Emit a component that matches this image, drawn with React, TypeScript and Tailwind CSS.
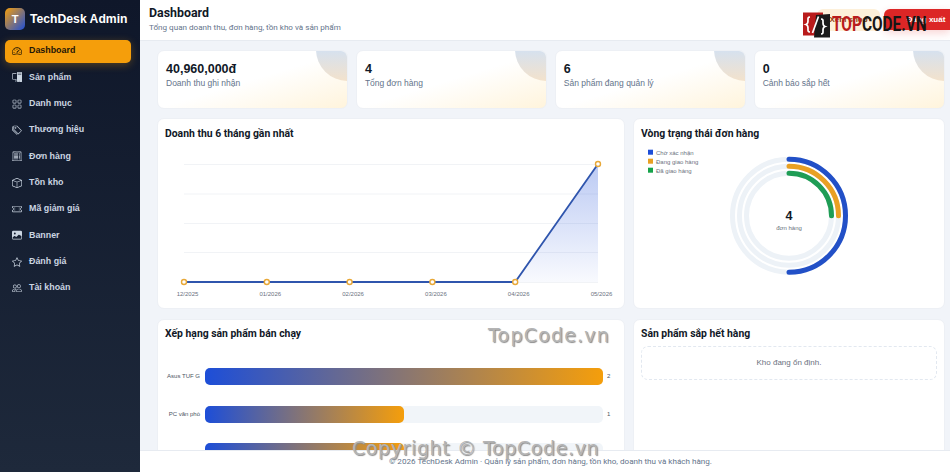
import {
  BsSpeedometer2,
  BsPcDisplay,
  BsGrid,
  BsTags,
  BsReceiptCutoff,
  BsBox,
  BsTicketPerforated,
  BsImageFill,
  BsStar,
  BsPeople,
} from 'react-icons/bs';

const navItems = [
  { label: 'Dashboard', icon: BsSpeedometer2, active: true },
  { label: 'Sản phẩm', icon: BsPcDisplay },
  { label: 'Danh mục', icon: BsGrid },
  { label: 'Thương hiệu', icon: BsTags },
  { label: 'Đơn hàng', icon: BsReceiptCutoff },
  { label: 'Tồn kho', icon: BsBox },
  { label: 'Mã giảm giá', icon: BsTicketPerforated },
  { label: 'Banner', icon: BsImageFill },
  { label: 'Đánh giá', icon: BsStar },
  { label: 'Tài khoản', icon: BsPeople },
];

const stats = [
  { value: '40,960,000đ', label: 'Doanh thu ghi nhận' },
  { value: '4', label: 'Tổng đơn hàng' },
  { value: '6', label: 'Sản phẩm đang quản lý' },
  { value: '0', label: 'Cảnh báo sắp hết' },
];

const months = ['12/2025', '01/2026', '02/2026', '03/2026', '04/2026', '05/2026'];
const pointX = [184, 266.8, 349.6, 432.4, 515.2, 598];
const pointY = [282, 282, 282, 282, 282, 164];

const bars = [
  { name: 'Asus TUF G', value: '2', width: '100%' },
  { name: 'PC văn phò', value: '1', width: '50%' },
  { name: '', value: '', width: '50%' },
];

const legend = [
  { label: 'Chờ xác nhận', color: '#1d4ed8' },
  { label: 'Đang giao hàng', color: '#e9a023' },
  { label: 'Đã giao hàng', color: '#16a34a' },
];

function Sidebar() {
  return (
    <aside className="w-[140px] shrink-0 bg-gradient-to-b from-[#0f172a] to-[#1e293b] px-[5px] pt-[8px]">
      <div className="flex items-center gap-[5px] h-[22px]">
        <div className="w-[20px] h-[22px] rounded-[5px] bg-linear-to-br/srgb from-[#f59e0b] to-[#1d4ed8] flex items-center justify-center text-white text-[11px] font-bold">
          T
        </div>
        <span className="text-white text-[12.2px] font-bold whitespace-nowrap">TechDesk Admin</span>
      </div>
      <nav className="mt-[9.5px] flex flex-col gap-[3.35px]">
        {navItems.map(item => {
          const Icon = item.icon;
          return (
            <div
              key={item.label}
              className={`h-[23px] w-[126px] rounded-[5px] flex items-center gap-[7px] pl-[7px] text-[8.9px] font-bold ${
                item.active
                  ? 'bg-[#f59e0b] text-[#1f1607] shadow-[0_2px_8px_rgba(245,158,11,0.3)]'
                  : 'text-[#cbd5e1]'
              }`}
            >
              <Icon className="w-[10px] h-[10px] shrink-0" />
              <span>{item.label}</span>
            </div>
          );
        })}
      </nav>
    </aside>
  );
}

function StatCard({ value, label }: { value: string; label: string }) {
  return (
    <div className="relative h-[59px] overflow-hidden rounded-[7px] border border-[#edf0f5] bg-gradient-to-br from-white from-50% to-[#fff4dc] pl-[8px] pt-[10px]">
      <div className="absolute -top-[33px] -right-[32px] w-[63px] h-[63px] rounded-full bg-linear-to-b/srgb from-[#d5e1f0] from-50% to-[#f3e2cc]" />
      <div className="relative text-[12.5px] leading-[16px] font-bold text-[#111827]">{value}</div>
      <div className="relative text-[8.5px] leading-[12px] text-[#64748b]">{label}</div>
    </div>
  );
}

function CardTitle({ children }: { children: string }) {
  return <h3 className="text-[10.4px] leading-[14px] font-bold text-[#111827] font-['Roboto',sans-serif]">{children}</h3>;
}

function RevenueChart() {
  const line = pointX.map((x, i) => `${x},${pointY[i]}`).join(' ');
  return (
    <svg viewBox="165 146 452 160" className="mt-[5px] block w-[452px] h-[160px]">
      <defs>
        <linearGradient id="area" x1="0" y1="0" x2="0" y2="1">
          <stop offset="0%" stopColor="#1d4ed8" stopOpacity="0.3" />
          <stop offset="100%" stopColor="#1d4ed8" stopOpacity="0.03" />
        </linearGradient>
      </defs>
      {[164.5, 194, 223.5, 252.5, 282.5].map(y => (
        <line key={y} x1="184" x2="598" y1={y} y2={y} stroke="#f1f3f6" strokeWidth="1" />
      ))}
      <polygon points="515.2,282 598,164 598,282" fill="url(#area)" />
      <polyline points={line} fill="none" stroke="#2f55ad" strokeWidth="1.8" />
      {pointX.map((x, i) => (
        <circle key={x} cx={x} cy={pointY[i]} r="2.5" fill="#fff" stroke="#e8a838" strokeWidth="1.4" />
      ))}
      {months.map((m, i) => (
        <text key={m} x={pointX[i] + 3.5} y="295.5" textAnchor="middle" fontSize="6" fill="#6b7280">
          {m}
        </text>
      ))}
    </svg>
  );
}

function StatusRing() {
  const cx = 789;
  const cy = 215.7;
  return (
    <svg viewBox="641 146 296 160" className="mt-[5px] block w-[296px] h-[160px]">
      {legend.map((l, i) => (
        <g key={l.label}>
          <rect x="648" y={149.7 + i * 9} width="5" height="5" fill={l.color} />
          <text x="656" y={154.5 + i * 9} fontSize="6" fill="#6b7280">
            {l.label}
          </text>
        </g>
      ))}
      {[56.5, 49.5, 42.5].map(r => (
        <circle key={r} cx={cx} cy={cy} r={r} fill="none" stroke="#edf2f7" strokeWidth="5" />
      ))}
      <path d={`M ${cx} ${cy - 56.5} A 56.5 56.5 0 0 1 ${cx} ${cy + 56.5}`} fill="none" stroke="#2250c7" strokeWidth="5" strokeLinecap="round" />
      <path d={`M ${cx} ${cy - 49.5} A 49.5 49.5 0 0 1 ${cx + 49.5} ${cy}`} fill="none" stroke="#e9a023" strokeWidth="5" strokeLinecap="round" />
      <path d={`M ${cx} ${cy - 42.5} A 42.5 42.5 0 0 1 ${cx + 42.5} ${cy}`} fill="none" stroke="#1f9d55" strokeWidth="5" strokeLinecap="round" />
      <text x={cx} y={cy + 4} textAnchor="middle" fontSize="12.5" fontWeight="700" fill="#111827">
        4
      </text>
      <text x={cx} y={cy + 14} textAnchor="middle" fontSize="6" fill="#6b7280">
        đơn hàng
      </text>
    </svg>
  );
}

function TopcodeLogo() {
  return (
    <div className="absolute left-[803px] top-[12px] flex items-center">
      <svg viewBox="0 0 27 26" className="w-[27px] h-[26px]">
        <rect x="0" y="0.5" width="20" height="23" fill="#b91c1c" />
        <polygon points="13,3 27,2 27,25.5 11,25.5" fill="#1a1a1a" />
        <path d="M7 5 C4.5 5 5 7 5 9 C5 11 4.5 12 3 12.5 C4.5 13 5 14 5 16 C5 18 4.5 20 7 20" fill="none" stroke="#fff" strokeWidth="1.7" />
        <path d="M9.5 21 L15.5 4.5" stroke="#fff" strokeWidth="1.7" />
        <path d="M18 7 C20.5 7 20 9 20 11 C20 13 20.5 14 22 14.5 C20.5 15 20 16 20 18 C20 20 20.5 22 18 22" fill="none" stroke="#fff" strokeWidth="1.7" />
      </svg>
      <span className="ml-[2px] origin-left scale-x-[0.79] text-[19.5px] leading-[24px] font-bold whitespace-nowrap font-['Roboto',sans-serif]">
        <span className="text-[#b91c1c]">TOP</span>
        <span className="text-[#161616]">CODE.VN</span>
      </span>
    </div>
  );
}

export default function App() {
  return (
    <div className="relative flex h-screen overflow-hidden bg-[#f1f4f9] font-['Liberation_Sans',Arial,sans-serif]">
      <Sidebar />
      <div className="flex-1 min-w-0 flex flex-col">
        <header className="h-[41px] shrink-0 bg-white border-b border-[#e7ebf1] flex justify-between pl-[9px]">
          <div className="pt-[5px]">
            <h1 className="text-[12.4px] leading-[15px] font-bold text-[#111827] font-['Roboto',sans-serif]">Dashboard</h1>
            <p className="text-[8.1px] leading-[12px] mt-[1px] text-[#64748b] font-['Roboto',sans-serif]">Tổng quan doanh thu, đơn hàng, tồn kho và sản phẩm</p>
          </div>
          <div className="flex gap-[4px] pt-[9px]">
            <button className="w-[63px] h-[22px] rounded-[6px] bg-[#fdf0da] text-[8px] font-bold text-[#92400e]">Xem shop</button>
            <button className="w-[66px] h-[21px] rounded-l-[6px] bg-[#dc2626] text-[8px] font-bold text-white shadow-[0_3px_8px_rgba(220,38,38,0.2)] pl-[18px]">
              Đăng xuất
            </button>
          </div>
        </header>

        <main className="flex-1 min-h-0 overflow-hidden pl-[17px] pr-[5px] pt-[9px]">
          <div className="grid grid-cols-4 gap-[7.5px]">
            {stats.map(s => (
              <StatCard key={s.label} value={s.value} label={s.label} />
            ))}
          </div>

          <div className="mt-[9px] grid grid-cols-[468px_312px] gap-[8px]">
            <section className="h-[191px] rounded-[7px] border border-[#edf0f5] bg-white px-[7px] pt-[8px]">
              <CardTitle>Doanh thu 6 tháng gần nhất</CardTitle>
              <RevenueChart />
            </section>
            <section className="h-[191px] rounded-[7px] border border-[#edf0f5] bg-white px-[7px] pt-[8px]">
              <CardTitle>Vòng trạng thái đơn hàng</CardTitle>
              <StatusRing />
            </section>
          </div>

          <div className="mt-[10px] grid grid-cols-[468px_312px] gap-[8px]">
            <section className="h-[200px] rounded-[7px] border border-[#edf0f5] bg-white px-[7px] pt-[7px]">
              <CardTitle>Xếp hạng sản phẩm bán chạy</CardTitle>
              <div className="mt-[27px] flex flex-col gap-[20.5px]">
                {bars.map((b, i) => (
                  <div key={i} className="flex items-center h-[17px]">
                    <span className="w-[35px] text-right text-[6px] text-[#4b5563] whitespace-nowrap">{b.name}</span>
                    <div className="ml-[5px] w-[398px] h-[17px] rounded-[5px] bg-[#f1f5f9]">
                      <div
                        className="h-full rounded-[5px] bg-linear-to-r/srgb from-[#1d4ed8] to-[#f59e0b]"
                        style={{ width: b.width }}
                      />
                    </div>
                    <span className="ml-[4px] text-[6px] text-[#4b5563]">{b.value}</span>
                  </div>
                ))}
              </div>
            </section>
            <section className="h-[200px] rounded-[7px] border border-[#edf0f5] bg-white px-[7px] pt-[7px]">
              <CardTitle>Sản phẩm sắp hết hàng</CardTitle>
              <div className="mt-[5px] h-[34px] rounded-[7px] border border-dashed border-[#e2e8f0] flex items-center justify-center text-[8px] text-[#6b7280]">
                Kho đang ổn định.
              </div>
            </section>
          </div>
        </main>

        <footer className="h-[22px] shrink-0 bg-white border-t border-[#e7ebf1] flex items-center justify-center pl-[11px] text-[8.1px] text-[#64748b] font-['Roboto',sans-serif]">
          © 2026 TechDesk Admin · Quản lý sản phẩm, đơn hàng, tồn kho, doanh thu và khách hàng.
        </footer>
      </div>

      {/* watermark của ảnh gốc */}
      <TopcodeLogo />
      <div className="absolute left-[488px] top-[323px] text-[19px] leading-[24px] tracking-[1.2px] text-[#b4b4b4] [text-shadow:1px_1px_1px_#8a8a8a] font-['DejaVu_Sans',sans-serif] whitespace-nowrap">
        TopCode.vn
      </div>
      <div className="absolute left-[352px] top-[436px] text-[19px] leading-[24px] tracking-[0.6px] text-[#b4b4b4] [text-shadow:1px_1px_1px_#8a8a8a] font-['DejaVu_Sans',sans-serif] whitespace-nowrap">
        Copyright © TopCode.vn
      </div>
    </div>
  );
}
